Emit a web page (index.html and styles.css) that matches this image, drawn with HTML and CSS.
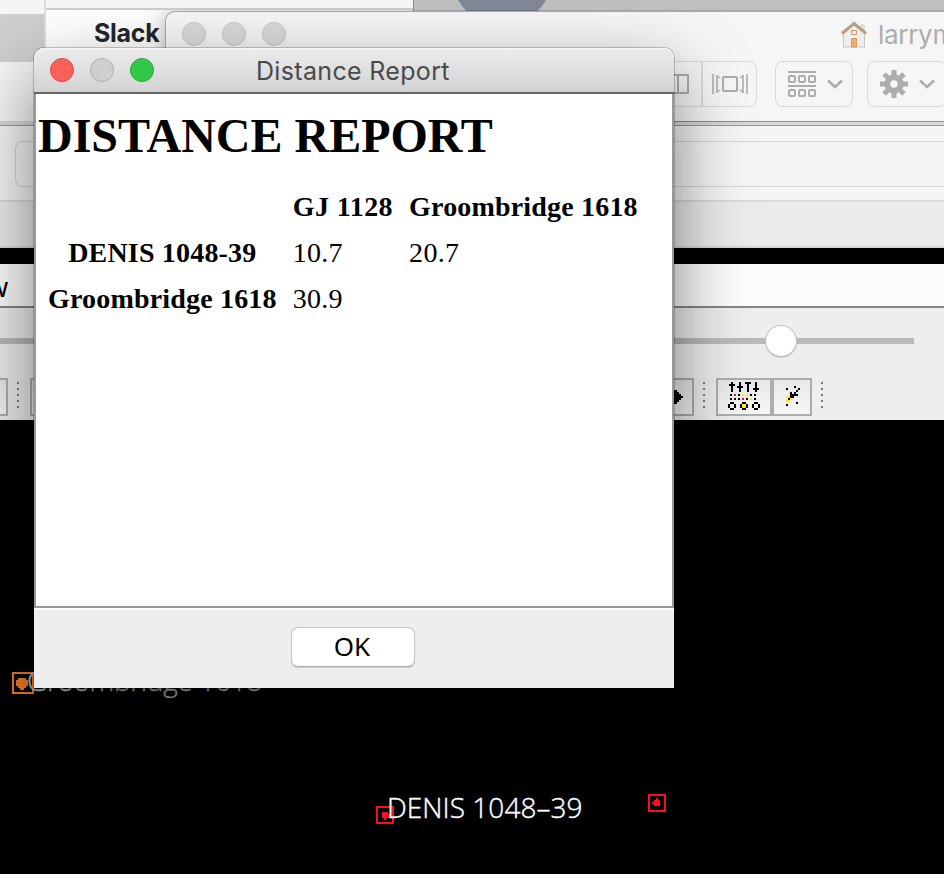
FILE: index.html
```html
<!DOCTYPE html>
<html lang="en">
<head>
<meta charset="utf-8">
<title>Distance Report</title>
<link rel="stylesheet" href="styles.css">
</head>
<body>
<main class="desktop">
  <section class="slack">
    <div class="slack-side"><div class="slack-selected"></div></div>
    <div class="slack-main"><strong>Slack</strong></div>
  </section>
  <section class="preview"><div class="avatar"></div></section>

  <section class="browser">
    <div class="browser-bar"><div class="field"></div></div>
    <div class="browser-tabs"></div>
  </section>

  <section class="finder">
    <div class="finder-title">
      <div class="lights"><i></i><i></i><i></i></div>
      <div class="finder-name">
        <svg width="28" height="28" viewBox="0 0 28 28">
          <path d="M21 4h3v6h-3z" fill="#eee" stroke="#ccc"/>
          <path d="M3.500 12 14 3.500 24.500 12v14h-21z" fill="#eee" stroke="#c6c6ca"/>
          <path d="M2 12.500 14 2.500 26 12.500" fill="none" stroke="#b89e83" stroke-width="3"/>
          <path d="M11.500 9.500h5v4h-5z" fill="#e6edf5" stroke="#d69a60"/>
          <path d="M11.500 17.500h5v8.500h-5z" fill="#f3ad6c" stroke="#d69a60"/>
        </svg>
        <span>larrym</span>
      </div>
    </div>
    <div class="finder-tools">
      <div class="tool views">
        <div class="view-cell"><svg width="28" height="20" viewBox="0 0 28 20" fill="none" stroke="#adadad" stroke-width="2"><path d="M1 1h26v18H1zM9 1v18M17 1v18"/></svg></div>
        <div class="view-cell flow"><svg width="36" height="20" viewBox="0 0 36 20" fill="none" stroke="#adadad" stroke-width="2"><rect x="11" y="3" width="14" height="14" rx="1"/><path d="M1 0v20M5 1v18M31 1v18M35 0v20" stroke-width="1.600"/><path d="M5 2l3 2M5 18l3-2M31 2l-3 2M31 18l-3-2" stroke-width="1.500"/></svg></div>
      </div>
      <div class="tool arrange">
        <svg width="28" height="26" viewBox="0 0 28 26" fill="none" stroke="#adadad" stroke-width="2"><path d="M0 1h28M0 15h28"/><rect x="1" y="5" width="6" height="6" rx="1"/><rect x="11" y="5" width="6" height="6" rx="1"/><rect x="21" y="5" width="6" height="6" rx="1"/><rect x="1" y="19" width="6" height="6" rx="1"/><rect x="11" y="19" width="6" height="6" rx="1"/><rect x="21" y="19" width="6" height="6" rx="1"/></svg>
        <svg width="16" height="10" viewBox="0 0 16 10" fill="none" stroke="#adadad" stroke-width="2.500"><path d="M1 1.500l7 6.500 7-6.500"/></svg>
      </div>
      <div class="tool action">
        <svg width="28" height="28" viewBox="-14 -14 28 28"><circle r="6.700" fill="none" stroke="#adadad" stroke-width="6"/><g stroke="#adadad" stroke-width="5"><path d="M0-14v5M0 14v-5M-14 0h5M14 0h-5M-9.900-9.900l3.500 3.500M9.900-9.900l-3.500 3.500M-9.900 9.900l3.500-3.500M9.900 9.900l-3.500-3.500"/></g></svg>
        <svg width="16" height="10" viewBox="0 0 16 10" fill="none" stroke="#adadad" stroke-width="2.500"><path d="M1 1.500l7 6.500 7-6.500"/></svg>
      </div>
    </div>
  </section>

  <section class="starmap">
    <div class="menu"><span>w</span></div>
    <div class="slider"><div class="track"></div><div class="knob"></div></div>
    <div class="toolbar">
      <div class="btn first"></div>
      <div class="grip"></div>
      <div class="btn long"><svg width="10" height="14" viewBox="0 0 10 14" shape-rendering="crispEdges"><path d="M0 0h4v2h2v2h2v2h2v2H8v2H6v2H4v2H0z"/></svg></div>
      <div class="grip"></div>
      <div class="btn mixer">
        <svg width="34" height="28" viewBox="0 0 34 28" shape-rendering="crispEdges">
          <path d="M3 0h2v10H3zM1 2h6v2H1zM11 0h2v10h-2zM9 4h6v2H9zM17 0h6v2h-6zM19 0h2v10h-2zM27 0h2v10h-2zM25 6h6v2h-6z"/>
          <path d="M2 12h2v2H2zM10 12h2v2h-2zM22 12h2v2h-2zM26 12h2v2h-2zM2 16h2v2H2zM6 16h2v2H6zM10 16h2v2h-2zM18 16h2v2h-2zM26 16h2v2h-2z"/>
          <path fill="#e01030" d="M6 12h2v2H6zM14 16h2v2h-2z"/>
          <path fill="#ffe92e" d="M14 12h2v2h-2zM18 12h2v2h-2zM22 16h2v2h-2zM14 22h4v4h-4z"/>
          <path d="M2 20h4v2H2zM2 26h4v2H2zM0 22h2v4H0zM6 22h2v4H6zM14 20h4v2h-4zM14 26h4v2h-4zM12 22h2v4h-2zM18 22h2v4h-2zM26 20h4v2h-4zM26 26h4v2h-4zM24 22h2v4h-2zM30 22h2v4h-2z"/>
        </svg>
      </div>
      <div class="btn pointer">
        <svg width="16" height="20" viewBox="0 0 16 20" shape-rendering="crispEdges">
          <path fill="#fff000" d="M2 10h2v2h2v2H4v2H0v-2h2v-2H0v-2h2z"/>
          <path d="M8 0h2v2H8zM0 2h2v2H0zM12 2h2v2h-2zM10 4h2v2h-2zM8 6h2v2h2v2H8v2H4V6h2v2h2zM2 12h2v2H2zM10 16h2v2h-2zM0 18h2v2H0z"/>
        </svg>
      </div>
      <div class="grip"></div>
    </div>
  </section>

  <div class="star orange">
    <svg width="22" height="22" viewBox="0 0 22 22" shape-rendering="crispEdges"><path fill="none" stroke="#f07a24" stroke-width="2" d="M1 1h20v20H1z"/><path fill="#f07a24" d="M6 6h8v2h2v6h-2v2h-2v2H8v-2H6v-2H4V8h2z"/></svg>
  </div>
  <div class="label groom">Groombridge 1618</div>
  <div class="star denis">
    <svg width="18" height="18" viewBox="0 0 18 18" shape-rendering="crispEdges"><path fill="none" stroke="#fa0f20" stroke-width="2" d="M1 1h16v16H1z"/><path fill="#fa0f20" d="M6 6h6v2h2v4h-4v2H8v-2H6z"/></svg>
  </div>
  <div class="label denis-name">DENIS 1048–39</div>
  <div class="star gj">
    <svg width="18" height="18" viewBox="0 0 18 18" shape-rendering="crispEdges"><path fill="none" stroke="#fa0f20" stroke-width="2" d="M1 1h16v16H1z"/><path fill="#fa0f20" d="M8 4h2v2h2v6H6v-2H4V8h2V6h2z"/></svg>
  </div>

  <section class="dialog">
    <header class="titlebar">
      <div class="lights"><i class="close"></i><i></i><i class="zoom"></i></div>
      <span class="title">Distance Report</span>
    </header>
    <div class="report">
      <h1>DISTANCE REPORT</h1>
      <table>
        <tr><th></th><th>GJ 1128</th><th>Groombridge 1618</th></tr>
        <tr><th>DENIS 1048-39</th><td>10.7</td><td>20.7</td></tr>
        <tr><th>Groombridge 1618</th><td>30.9</td><td></td></tr>
      </table>
    </div>
    <footer class="actions"><button>OK</button></footer>
  </section>
</main>
</body>
</html>
```
FILE: styles.css
```css
* { box-sizing: border-box; }
body { margin: 0; background: #000; font-family: Inter, "Liberation Sans", sans-serif; }
svg { display: block; flex: none; }
.desktop { position: relative; width: 944px; height: 874px; overflow: hidden; background: #000; }

.slack { position: absolute; left: 0; top: 0; width: 414px; height: 125px; display: flex; background: #f6f6f6; }
.slack-side { width: 46px; padding-top: 14px; border-right: 2px solid #dedede; }
.slack-selected { height: 48px; background: #cfcfcf; }
.slack-main { flex: 1; margin-top: 8px; border-top: 2px solid #cdcdcd; background: #fff; padding: 7px 0 0 48px; }
.slack-main strong { display: block; font-size: 25px; line-height: 32px; letter-spacing: -0.300px; color: #24272a; }

.preview { position: absolute; left: 413px; top: 0; width: 531px; height: 125px; background: #c0c0c0; border-left: 1px solid #888; overflow: hidden; }
.avatar { width: 100px; height: 100px; margin: -74px 0 0 38px; border-radius: 50%; background: #828895; }

.browser { position: absolute; left: 0; top: 121px; width: 944px; height: 127px; background: #f5f5f5; border-top: 4px solid #d8dad8; }
.browser-bar { height: 77px; border-top: 1px solid #999; border-bottom: 2px solid #dadada; padding: 15px 0 0 15px; }
.field { width: 1000px; height: 46px; border: 1px solid #d4d4d4; border-radius: 8px; }
.browser-tabs { height: 46px; background: #ebebeb; border-bottom: 2px solid #d5d5d5; }

.finder { position: absolute; left: 165px; top: 11px; width: 860px; height: 111px; border: 1px solid #aaa; border-bottom-color: #8c8c8c; border-radius: 10px 0 0 0; background: #f6f6f6; box-shadow: 0 0 18px rgba(0,0,0,.28); clip-path: inset(-1px 0 0 -20px); }
.finder-title { height: 43px; display: flex; align-items: center; padding-left: 16px; }
.lights { display: flex; gap: 16px; }
.lights i { width: 24px; height: 24px; border-radius: 50%; background: #dadada; border: 1px solid #c6c6c6; }
.finder-name { display: flex; align-items: center; gap: 10px; margin: 2px 0 0 554px; font-size: 26px; letter-spacing: -0.300px; color: #adadad; }
.finder-tools { display: flex; margin: 6px 0 0 464px; }
.tool { display: flex; align-items: center; height: 46px; border: 1px solid #d8d8d8; border-radius: 8px; }
.views { width: 127px; }
.view-cell { width: 72px; height: 44px; display: flex; align-items: center; justify-content: flex-end; padding-right: 12px; border-right: 2px solid #dcdcdc; }
.view-cell.flow { width: 53px; border: 0; padding-right: 8px; }
.arrange { width: 78px; margin-left: 18px; padding-left: 12px; gap: 11px; }
.action { width: 80px; margin-left: 14px; padding-left: 12px; gap: 11px; }

.starmap { position: absolute; left: 0; top: 264px; width: 944px; height: 156px; background: #eee; }
.menu { height: 44px; background: #fcfcfc; border-bottom: 2px solid #858585; overflow: hidden; }
.menu span { display: block; margin-left: -13px; padding-top: 6px; font: 27px/34px "Noto Sans", sans-serif; }
.slider { position: relative; height: 70px; padding-top: 30px; }
.track { width: 914px; height: 6px; background: #bababa; }
.knob { position: absolute; left: 766px; top: 18px; width: 30px; height: 30px; border-radius: 50%; background: #fff; box-shadow: 0 0 0 1px #c4c4c4, 0 1px 2px #888; }
.toolbar { display: flex; height: 38px; }
.btn { height: 38px; border: 2px solid #adadad; background: linear-gradient(#e8e8e8, #f6f6f6); display: flex; align-items: center; justify-content: center; padding-bottom: 2px; }
.first { width: 8px; border-left: 0; }
.grip { width: 2px; height: 26px; margin: 4px 11px 0 9px; background: repeating-linear-gradient(#7b7b7b 0 2px, transparent 2px 6px); }
.long { width: 664px; justify-content: flex-end; padding: 0 9px 0 0; }
.mixer { width: 56px; padding-left: 2px; }
.pointer { width: 40px; padding-left: 4px; }

.star { position: absolute; }
.orange { left: 12px; top: 672px; }
.denis { left: 376px; top: 806px; }
.gj { left: 648px; top: 794px; }
.label { position: absolute; font: 300 28px/32px "Open Sans", sans-serif; color: #fff; white-space: nowrap; -webkit-text-stroke: .4px currentColor; }
.groom { left: 27px; top: 664px; color: #bbb; letter-spacing: -.35px; }
.denis-name { left: 387px; top: 791px; letter-spacing: .05px; }

.dialog { position: absolute; left: 34px; top: 48px; width: 640px; height: 640px; display: flex; flex-direction: column; border-radius: 10px 10px 0 0; background: #eee; box-shadow: 0 0 0 1px rgba(0,0,0,.2), 0 28px 72px rgba(0,0,0,.5); }
.titlebar { height: 46px; display: flex; align-items: center; padding: 0 16px; border-bottom: 2px solid #656565; border-radius: 10px 10px 0 0; background: linear-gradient(#ececec, #d2d2d2); box-shadow: inset 0 1px #f8f8f8; }
.titlebar .lights i { background: #cfcfcf; border-color: #adadad; }
.titlebar .lights .close { background: #fc605b; border-color: #df4744; }
.titlebar .lights .zoom { background: #34c84a; border-color: #27a935; }
.title { margin: 2px 0 0 102px; font-size: 25px; letter-spacing: .33px; color: #4a4a4a; white-space: nowrap; }
.report { height: 514px; border: 2px solid #999; border-top: 0; background: #fff; padding: 14px 2px 0; font-family: "Liberation Serif", serif; color: #000; }
h1 { margin: 0; font-size: 48px; line-height: 56px; white-space: nowrap; }
table { margin: 20px 0 0 2px; border-collapse: collapse; font-size: 28px; letter-spacing: .18px; }
th, td { height: 46px; padding: 0 8px; line-height: 32px; white-space: nowrap; }
th:nth-child(2) { letter-spacing: .45px; }
td { text-align: left; letter-spacing: .3px; }
.actions { flex: 1; border-top: 2px solid #fff; padding: 17px 0 0 257px; }
button { width: 124px; height: 40px; padding: 0 2px 3px 0; border: 1px solid #c6c6c6; border-bottom-color: #aaa; border-radius: 7px; background: #fff; font: 26px "Noto Sans", sans-serif; color: #000; box-shadow: 0 1px 1px rgba(0,0,0,.15); }
```
